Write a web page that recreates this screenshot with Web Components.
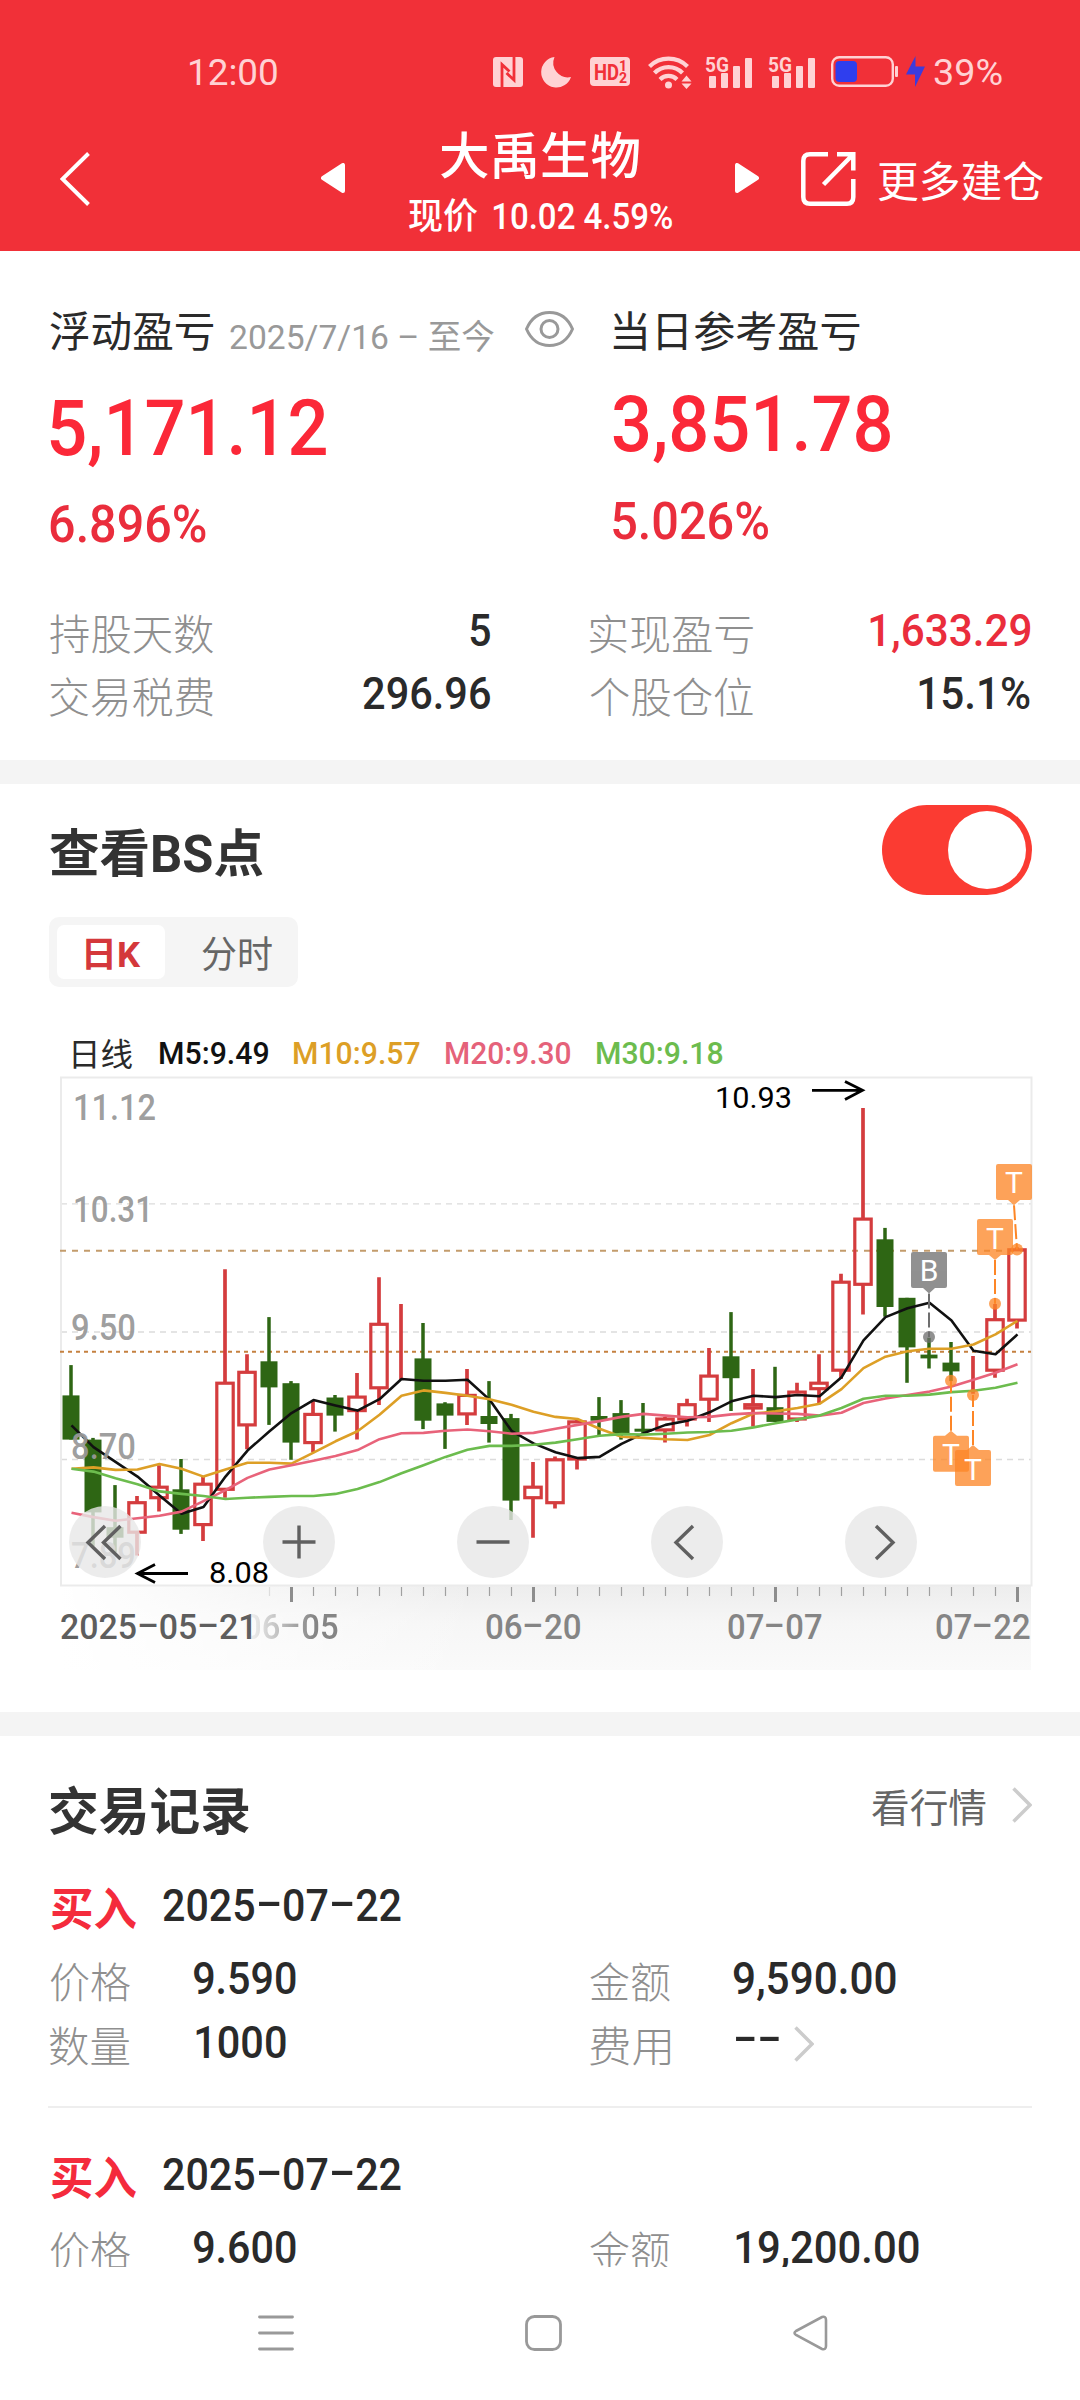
<!DOCTYPE html>
<html lang="zh-CN">
<head>
<meta charset="UTF-8">
<title>大禹生物</title>
<style>
    body {
        margin: 0;
        width: 1080px;
        height: 2400px;
        overflow: hidden;
        background: #fff;
        color: #2a2a2a;
        font-family: Roboto, "Noto Sans CJK SC", sans-serif;
    }
</style>
</head>
<body>
<stock-app></stock-app>

<script>
// One line of text whose box is its ink: the w attribute is the drawn width
class FitText extends HTMLElement {
    constructor() {
        super();
        this.attachShadow({ mode: "open" });
    }

    connectedCallback() {
        const text = this.textContent;
        this.shadowRoot.innerHTML = `
        <style>
            :host {
                display: block;
                flex: none;
            }

            span {
                display: block;
                width: max-content;
                white-space: pre;
                transform-origin: 0 0;
            }

            i {
                display: inline-block;
                font-style: normal;
                margin: 0 .15em;
                transform: translateY(-.085em) scaleX(1.9);
            }
        </style>
        <span>${text.replace(/-/g, "<i>-</i>")}</span>`;

        const css = getComputedStyle(this);
        const ctx = document.createElement("canvas").getContext("2d");
        ctx.font = `${css.fontWeight} ${css.fontSize} ${css.fontFamily}`;
        const m = ctx.measureText(text);
        const span = this.shadowRoot.querySelector("span");
        const height = Math.round(m.actualBoundingBoxAscent + m.actualBoundingBoxDescent);
        this.style.height = height + "px";
        span.style.lineHeight = height + "px";

        const left = -m.actualBoundingBoxLeft;
        const right = m.width - m.actualBoundingBoxRight;
        const ink = span.getBoundingClientRect().width - left - right;
        const width = Number(this.getAttribute("w")) || ink;
        const scale = width / ink;
        const baseline = (height + m.fontBoundingBoxAscent - m.fontBoundingBoxDescent) / 2;
        this.style.width = width + "px";
        span.style.transform = `translate(${-left * scale}px, ${m.actualBoundingBoxAscent - baseline}px) scaleX(${scale})`;
    }
}

class StatusBar extends HTMLElement {
    constructor() {
        super();
        this.attachShadow({ mode: "open" });
        const signal = `
        <svg width="46" height="34" viewBox="0 0 46 34" fill="currentColor">
            <text x="-1" y="17" font-size="21" font-weight="700" textLength="24" lengthAdjust="spacingAndGlyphs">5G</text>
            <rect x="3" y="21" width="7" height="12" rx="1"/>
            <rect x="15" y="18" width="7" height="15" rx="1"/>
            <rect x="27" y="11" width="7" height="22" rx="1"/>
            <rect x="39" y="3" width="7" height="30" rx="1"/>
        </svg>`;
        this.shadowRoot.innerHTML = `
        <style>
            :host {
                display: flex;
                align-items: center;
                box-sizing: border-box;
                height: 100px;
                padding: 43px 0 0 190px;
                color: #ffd2d4;
            }

            svg, fit-text { flex: none; overflow: visible; }
            fit-text { font-size: 37px; }
            .nfc { margin-left: 216px; }
            .moon { margin-left: 18px; }
            .hd { margin-left: 19px; }
            .wifi { margin: 0 14px 0 18px; }
            .battery { margin: 0 8px 0 16px; }
            .bolt { margin-right: 9px; }
            .gap { width: 17px; flex: none; }
        </style>
        <fit-text w="87">12:00</fit-text>
        <svg class="nfc" width="30" height="30" viewBox="0 0 30 30">
            <rect width="30" height="30" rx="3" fill="currentColor"/>
            <path d="M9 30V7.5L16.5 14.5M21 0V23L13.5 16" fill="none" stroke="#f13038" stroke-width="2.8"/>
        </svg>
        <svg class="moon" width="30" height="30" viewBox="0 0 30 30">
            <path d="M13.5 0A15.3 15.3 0 1 0 30 20A14.6 14.6 0 0 1 13.5 0Z" fill="currentColor"/>
        </svg>
        <svg class="hd" width="40" height="29" viewBox="0 0 40 29" fill="#f13038" font-weight="700">
            <rect width="40" height="29" rx="4" fill="currentColor"/>
            <text x="4" y="22.5" font-size="22" textLength="25" lengthAdjust="spacingAndGlyphs">HD</text>
            <text x="29" y="14" font-size="14">1</text>
            <text x="29" y="26" font-size="14">2</text>
        </svg>
        <svg class="wifi" width="44" height="35" viewBox="0 0 44 35" fill="none" stroke="currentColor" stroke-width="4.2">
            <path d="M1.5 12.5A27 27 0 0 1 39.5 12.5M6.5 19A19.5 19.5 0 0 1 34.5 19M12 25.5A12 12 0 0 1 29 25.5"/>
            <circle cx="20.5" cy="31" r="3.5" fill="currentColor" stroke="none"/>
            <path d="M33.5 27.5l5-6 5 6zM33.5 29.500l5 5.5 5-5.5z" fill="currentColor" stroke="none"/>
        </svg>
        ${signal}
        <div class="gap"></div>
        ${signal}
        <svg class="battery" width="67" height="31" viewBox="0 0 67 31">
            <rect x="1.2" y="1.2" width="60.6" height="28.6" rx="7" fill="none" stroke="currentColor" stroke-width="2.4"/>
            <rect x="4.5" y="5" width="21.5" height="21" rx="4" fill="#2f3eee"/>
            <rect x="64" y="10" width="3" height="11" rx="1" fill="currentColor"/>
        </svg>
        <svg class="bolt" width="19" height="31" viewBox="0 0 19 31">
            <path d="M9.5 0L0 18.5H9V31L19 10.5H9.5Z" fill="#3d3bdc"/>
        </svg>
        <fit-text w="68">39%</fit-text>`;
    }
}

class StockHeader extends HTMLElement {
    constructor() {
        super();
        this.attachShadow({ mode: "open" });
        this.shadowRoot.innerHTML = `
        <style>
            :host {
                display: block;
                height: 251px;
                background: #f13038;
                color: #fff;
            }

            .bar {
                display: flex;
                align-items: flex-start;
                padding-left: 60px;
            }

            svg { flex: none; }
            .back { margin-top: 52px; }
            .prev { margin: 63px 64px 0 231px; }
            .next { margin: 63px 42px 0 63px; }
            .share { margin: 52px 22px 0 0; }
            .name { margin: 31px 0 19px 32px; font-size: 50px; font-weight: 500; }
            .price { display: flex; align-items: flex-start; font-size: 36px; font-weight: 500; }
            .price fit-text + fit-text { margin: 5px 0 0 15px; }
            .more { margin-top: 61px; font-size: 42px; }
        </style>
        <status-bar></status-bar>
        <div class="bar">
            <svg class="back" width="30" height="54" viewBox="0 0 30 54">
                <path d="M28.5 1.5L2.5 27L28.5 52.5" fill="none" stroke="#fff" stroke-width="4"/>
            </svg>
            <svg class="prev" width="24" height="30" viewBox="0 0 24 30">
                <path d="M2 15L22 2V28Z" fill="#fff" stroke="#fff" stroke-width="4" stroke-linejoin="round"/>
            </svg>
            <div>
                <fit-text class="name" w="198">大禹生物</fit-text>
                <div class="price">
                    <fit-text w="69">现价</fit-text>
                    <fit-text w="179">10.02 4.59%</fit-text>
                </div>
            </div>
            <svg class="next" width="24" height="30" viewBox="0 0 24 30">
                <path d="M22 15L2 2V28Z" fill="#fff" stroke="#fff" stroke-width="4" stroke-linejoin="round"/>
            </svg>
            <svg class="share" width="55" height="54" viewBox="0 0 55 54" fill="none" stroke="#fff" stroke-width="4.5">
                <path d="M27 2.3H9Q2.3 2.3 2.3 9V45Q2.3 51.7 9 51.7H46Q52.3 51.7 52.3 45V27"/>
                <path d="M36 2.3H52.3V18.5M51.5 3L22.5 32.5"/>
            </svg>
            <fit-text class="more" w="165">更多建仓</fit-text>
        </div>`;
    }
}

class ProfitSummary extends HTMLElement {
    constructor() {
        super();
        this.attachShadow({ mode: "open" });
        this.shadowRoot.innerHTML = `
        <style>
            :host {
                display: block;
                box-sizing: border-box;
                height: 509px;
                padding: 0 50px;
            }

            .top {
                display: flex;
                align-items: flex-start;
                height: 363px;
            }

            .left { width: 563px; padding-top: 60px; }
            .right { padding-top: 59px; }
            .row { display: flex; align-items: flex-start; height: 87px; }
            .right .row { height: 85px; }
            .title { font-size: 42px; }
            .date { margin: 8px 31px 0 16px; font-size: 34px; color: #999; }
            .big { height: 106px; color: #fb2838; font-size: 77px; font-weight: 500; }
            .rate { color: #ea2d3c; font-size: 51px; font-weight: 500; }

            .stats {
                display: grid;
                grid-template-columns: 440px 440px;
                column-gap: 100px;
                row-gap: 23px;
            }

            .stats div {
                display: flex;
                justify-content: space-between;
                align-items: flex-start;
                height: 40px;
            }

            .stats fit-text { font-size: 42px; font-weight: 300; color: #8f8f8f; }
            .stats fit-text.v { font-size: 45px; font-weight: 500; color: #2a2a2a; }
            .stats fit-text.up { color: #ea2d3c; }
        </style>
        <div class="top">
            <div class="left">
                <div class="row">
                    <fit-text class="title" w="163.5">浮动盈亏</fit-text>
                    <fit-text class="date" w="264">2025/7/16 – 至今</fit-text>
                    <svg width="49" height="36" viewBox="0 0 49 36" fill="none" stroke="#999" stroke-width="3">
                        <path d="M1.5 18C6 7.5 14 1.5 24.5 1.5S43 7.5 47.5 18C43 28.5 35 34.5 24.5 34.5S6 28.5 1.5 18Z"/>
                        <circle cx="24.5" cy="18" r="8.5"/>
                    </svg>
                </div>
                <div class="big"><fit-text w="276">5,171.12</fit-text></div>
                <fit-text class="rate" w="156">6.896%</fit-text>
            </div>
            <div class="right">
                <div class="row"><fit-text class="title" w="246.5">当日参考盈亏</fit-text></div>
                <div class="big"><fit-text w="277">3,851.78</fit-text></div>
                <fit-text class="rate" w="155.5">5.026%</fit-text>
            </div>
        </div>
        <div class="stats">
            <div><fit-text w="163.5">持股天数</fit-text><fit-text class="v" w="20">5</fit-text></div>
            <div><fit-text w="163.5">实现盈亏</fit-text><fit-text class="v up" w="160">1,633.29</fit-text></div>
            <div><fit-text w="163.5">交易税费</fit-text><fit-text class="v" w="127">296.96</fit-text></div>
            <div><fit-text w="163.5">个股仓位</fit-text><fit-text class="v" w="111">15.1%</fit-text></div>
        </div>`;
    }
}

// [up, high, body top, body bottom, low] in chart units, one per trading day
const DAYS = [
    [0, 820, 892, 997, 997], [0, 993, 997, 1170, 1250], [0, 1105, 1205, 1230, 1265], [1, 1131, 1147, 1217, 1272],
    [1, 1058, 1110, 1135, 1168], [0, 1043, 1115, 1211, 1221], [1, 1085, 1103, 1199, 1238], [1, 592, 863, 1115, 1135],
    [1, 794, 837, 962, 1020], [0, 706, 811, 873, 962], [0, 858, 863, 1004, 1045], [1, 903, 937, 1004, 1027],
    [0, 891, 897, 940, 978], [1, 839, 896, 928, 997], [1, 611, 723, 874, 915], [1, 675, 776, 776, 855],
    [0, 720, 804, 952, 972], [0, 908, 911, 940, 1019], [1, 829, 892, 936, 962], [0, 858, 941, 960, 1004],
    [0, 936, 946, 1142, 1188], [1, 1050, 1110, 1135, 1230], [1, 1037, 1045, 1147, 1161], [1, 950, 955, 1043, 1068],
    [0, 896, 941, 952, 990], [0, 903, 934, 985, 997], [0, 910, 971, 976, 985], [1, 943, 948, 974, 1004],
    [1, 900, 914, 948, 966], [1, 779, 846, 901, 955], [0, 694, 799, 851, 929], [1, 829, 914, 922, 966],
    [0, 824, 920, 955, 955], [1, 862, 884, 948, 955], [1, 794, 863, 876, 910], [1, 603, 623, 832, 853],
    [1, 209, 473, 628, 700], [0, 494, 521, 682, 705], [0, 660, 660, 778, 862], [0, 755, 795, 804, 828],
    [0, 765, 814, 835, 858], [1, 798, 831, 831, 888], [1, 675, 712, 832, 850], [1, 540, 546, 713, 733]
];

const AVERAGES = [
    ["#111", [963, 1015, 1050, 1085, 1130, 1173, 1157, 1085, 1023, 977, 934, 903, 916, 928, 901, 853, 857, 857, 855, 902, 976, 1006, 1027, 1041, 1038, 1007, 982, 962, 952, 932, 906, 893, 896, 891, 894, 849, 761, 706, 685, 672, 714, 786, 794, 747]],
    ["#dd9f26", [1066, 1063, 1069, 1068, 1055, 1066, 1085, 1068, 1052, 1052, 1054, 1028, 1001, 977, 938, 893, 880, 886, 893, 901, 914, 931, 943, 948, 971, 990, 993, 996, 998, 986, 958, 935, 930, 922, 912, 877, 827, 800, 787, 781, 781, 771, 747, 715]],
    ["#e8637a", [1171, 1181, 1190, 1184, 1178, 1168, 1143, 1117, 1088, 1068, 1058, 1047, 1036, 1022, 996, 982, 981, 976, 973, 977, 983, 981, 971, 962, 953, 943, 936, 940, 944, 943, 937, 934, 935, 936, 940, 933, 910, 899, 891, 883, 871, 855, 838, 818]],
    ["#6cbc4e", [1066, 1073, 1089, 1103, 1120, 1126, 1131, 1138, 1135, 1133, 1131, 1131, 1126, 1114, 1098, 1077, 1058, 1038, 1021, 1012, 1012, 1009, 1004, 996, 988, 984, 985, 983, 980, 979, 976, 968, 958, 949, 940, 922, 900, 893, 893, 890, 884, 881, 874, 862]]
];

const dayX = i => 71 + 22 * i;
const unitY = v => +(v / 2.376).toFixed(1);

class KlineChart extends HTMLElement {
    constructor() {
        super();
        this.attachShadow({ mode: "open" });
        this.render();
    }

    candles() {
        return DAYS.map(([up, high, top, bottom, low], i) => {
            const x = dayX(i);
            const [h, t, b, l] = [high, top, bottom, low].map(unitY);
            if (!up) {
                return `<path d="M${x} ${h}V${l}" stroke="#2e6614" stroke-width="3.5"/>
                <rect x="${x - 8.5}" y="${t}" width="17" height="${Math.max(b - t, 3)}" fill="#2e6614"/>`;
            }
            return `<path d="M${x} ${h}V${t}M${x} ${b}V${l}" stroke="#d43c3e" stroke-width="3.7"/>
            <rect x="${x - 8.2}" y="${t}" width="16.4" height="${b - t}" fill="none" stroke="#d43c3e" stroke-width="3.2"/>`;
        }).join("");
    }

    averages() {
        return AVERAGES.map(([color, values]) => {
            const points = values.map((v, i) => `${dayX(i) + 0.5},${unitY(v)}`).join(" ");
            return `<polyline points="${points}" fill="none" stroke="${color}" stroke-width="2.6" stroke-linejoin="round"/>`;
        }).join("");
    }

    // A flag with its tail towards the dot on the candle
    flag(letter, cx, top, tip, dotX, dotY, color) {
        const y = unitY(top);
        const t = unitY(tip);
        const below = tip < top;
        const edge = below ? y : y + 36;
        return `
        <g opacity=".76">
            <path d="M${cx - 16} ${y}h32a2 2 0 0 1 2 2v32a2 2 0 0 1-2 2h-32a2 2 0 0 1-2-2v-32a2 2 0 0 1 2-2zM${cx - 6} ${edge}L${cx} ${t}L${cx + 6} ${edge}z" fill="${color}"/>
            <circle cx="${dotX}" cy="${unitY(dotY)}" r="6" fill="${color}"/>
        </g>
        <path d="M${cx} ${t}L${dotX} ${unitY(dotY)}" stroke="${color}" stroke-width="2" stroke-dasharray="15 4"/>
        <text x="${cx}" y="${y + 29.5}" font-size="30" fill="#fff" text-anchor="middle">${letter}</text>`;
    }

    label(text, x, value, width) {
        return `<text x="${x - 2}" y="${unitY(value)}" textLength="${width + 4}" lengthAdjust="spacingAndGlyphs">${text}</text>`;
    }

    ticks() {
        let out = "";
        for (let i = 9; i < 44; i++) {
            const major = (i - 10) % 11 === 0;
            out += `<path d="M${dayX(i) + 0.5} 567V${major ? 582 : 576}" stroke="${i === 9 ? "#ddd" : major ? "#8d8d8d" : "#a0a0a0"}" stroke-width="${major ? 3 : 1.2}"/>`;
        }
        return out;
    }

    button(cx, icon) {
        return `<circle cx="${cx}" cy="522" r="36" fill="#e7e7e7" fill-opacity=".8"/>
        <path transform="translate(${cx} 522)" d="${icon}" fill="none" stroke="#606060" stroke-width="3.4"/>`;
    }

    render() {
        this.shadowRoot.innerHTML = `
        <style>
            :host { display: block; height: 692px; }

            .legend {
                display: flex;
                align-items: flex-start;
                height: 0;
                padding: 18px 0 0 73px;
                margin-bottom: -18px;
                font-size: 31px;
                font-weight: 500;
            }

            .legend fit-text { margin: 4px 26px 0 0; }
            .legend fit-text:first-child { margin: 0 28px 0 0; font-weight: 400; font-size: 32px; }

            .stack { display: grid; }
            .stack > * { grid-area: 1 / 1; }

            .axis {
                display: flex;
                align-items: flex-start;
                align-self: end;
                box-sizing: border-box;
                width: 971px;
                height: 85px;
                margin-left: 60px;
                padding: 29px 0 0 1px;
                color: #858585;
                font-size: 34.5px;
                font-weight: 500;
                background: linear-gradient(to right, #fff 0, rgba(255, 255, 255, .5) 200px, rgba(255, 255, 255, 0) 420px), linear-gradient(#ededed, #f6f6f6 45%, #fafafa);
            }

            .first { color: #5e5e5e; }
            .faded {
                margin: 0 148px 0 -7px;
                -webkit-mask-image: linear-gradient(to right, transparent, #000 75%);
                mask-image: linear-gradient(to right, transparent, #000 75%);
            }
            .mid { margin-right: 148px; }
            .late { margin-right: 114px; }
        </style>
        <div class="legend">
            <fit-text w="59">日线</fit-text>
            <fit-text w="108" style="color:#111">M5:9.49</fit-text>
            <fit-text w="126" style="color:#dd9f26">M10:9.57</fit-text>
            <fit-text w="125" style="color:#e5627a">M20:9.30</fit-text>
            <fit-text w="126" style="color:#6cbc4e">M30:9.18</fit-text>
        </div>
        <div class="stack">
            <div class="axis">
                <fit-text class="first" w="190">2025-05-21</fit-text>
                <fit-text class="faded" w="94">06-05</fit-text>
                <fit-text class="mid" w="94">06-20</fit-text>
                <fit-text class="late" w="94">07-07</fit-text>
                <fit-text w="94">07-22</fit-text>
            </div>
            <svg width="1080" height="650" viewBox="0 0 1080 650">
                <path d="M61 183.8H1031M61 312H1031M61 439.5H1031" stroke="#dcdcdc" stroke-width="1.3" stroke-dasharray="6 5"/>
                <rect x="61" y="57.5" width="970.5" height="508" fill="none" stroke="#ebebeb" stroke-width="2"/>
                <path d="M60 230.7H1031" stroke="#c39c6c" stroke-width="2" stroke-dasharray="6 6"/>
                <path d="M60 331.7H1031" stroke="#c58140" stroke-width="2" stroke-dasharray="4 4"/>
                ${this.candles()}
                ${this.averages()}
                <g fill="#999" fill-opacity=".95" font-size="36" font-weight="500">
                    ${this.label("11.12", 75, 238, 79)}
                    ${this.label("10.31", 75, 479, 76)}
                    ${this.label("9.50", 73, 760, 61)}
                    ${this.label("8.70", 73, 1042, 61)}
                    ${this.label("7.89", 73, 1303, 61)}
                </g>
                <g fill="#000" font-size="29.5">
                    ${this.label("10.93", 717, 208, 73)}
                    ${this.label("8.08", 211, 1337, 56)}
                </g>
                <path d="M812 70.3H862M845 61.5L862.5 70.3L845 79.5M188 553.5H138M155 544.5L137.5 553.5L155 562.5" fill="none" stroke="#000" stroke-width="2.8"/>
                ${this.flag("B", 929, 551, 650, 929, 753, "#6e6e6e")}
                ${this.flag("T", 1014, 342, 440, 1017, 545, "#fd8626")}
                ${this.flag("T", 995, 473, 570, 995, 674, "#fd8626")}
                ${this.flag("T", 951, 988, 976, 951, 857, "#fd8626")}
                ${this.flag("T", 973, 1022, 1010, 973, 891, "#fd8626")}
                ${this.ticks()}
                ${this.button(105, "M0 -16L-17 .5L0 17M15.5 -16L-1.5 .5L15.5 17")}
                ${this.button(299, "M-16.5 0H16.5M0 -16.5V16.5")}
                ${this.button(493, "M-16.5 0H16.5")}
                ${this.button(687, "M6 -16L-11 .5L6 17")}
                ${this.button(881, "M-5 -16L12 .5L-5 17")}
            </svg>
        </div>`;
    }
}

class BsSection extends HTMLElement {
    constructor() {
        super();
        this.attachShadow({ mode: "open" });
        this.shadowRoot.innerHTML = `
        <style>
            :host { display: block; height: 928px; }

            .head {
                display: flex;
                justify-content: space-between;
                align-items: flex-start;
                height: 112px;
                padding: 21px 48px 0 50px;
            }

            .title { margin-top: 23px; color: #333; font-size: 51px; font-weight: 700; }

            .switch {
                display: flex;
                justify-content: flex-end;
                box-sizing: border-box;
                width: 150px;
                height: 90px;
                padding: 6px;
                border-radius: 45px;
                background: #fb3b32;
            }

            .switch div { width: 78px; height: 78px; border-radius: 50%; background: #fff; }

            .tabs {
                display: flex;
                box-sizing: border-box;
                width: 249px;
                height: 70px;
                margin: 0 0 33px 49px;
                padding: 8px;
                border-radius: 10px;
                background: #f5f5f5;
            }

            .on {
                box-sizing: border-box;
                width: 108px;
                padding: 13px 0 0 29px;
                border-radius: 7px;
                background: #fff;
                color: #d4383b;
                font-size: 35px;
                font-weight: 700;
            }

            .off { margin: 11px 0 0 37px; color: #666; font-size: 37px; }
        </style>
        <div class="head">
            <fit-text class="title" w="213">查看BS点</fit-text>
            <div class="switch"><div></div></div>
        </div>
        <div class="tabs">
            <div class="on"><fit-text w="55">日K</fit-text></div>
            <fit-text class="off" w="70">分时</fit-text>
        </div>
        <kline-chart></kline-chart>`;
    }
}

class TradeRecord extends HTMLElement {
    constructor() {
        super();
        this.attachShadow({ mode: "open" });
    }

    connectedCallback() {
        const cell = (name, value) => `
        <div class="cell">
            <fit-text class="k" w="80">${name}</fit-text>
            <slot name="${value}"></slot>
        </div>`;
        this.shadowRoot.innerHTML = `
        <style>
            :host {
                display: block;
                box-sizing: border-box;
                height: 269px;
                margin: 0 48px;
                padding: 48px 2px 0;
                border-top: 2px solid transparent;
            }

            :host([line]) { border-top-color: #eee; }
            .head { display: flex; align-items: flex-start; height: 75px; }
            .type { margin: 0 27px 0 1px; color: #f42b3c; font-size: 45px; font-weight: 700; }
            .date { margin-top: 2px; font-size: 44px; font-weight: 500; }
            .grid { display: grid; grid-template-columns: 540px 1fr; grid-auto-rows: 63.5px; }
            .cell { display: flex; align-items: flex-start; }
            .k { margin-right: 64px; font-size: 42px; font-weight: 300; color: #8f8f8f; }
            ::slotted(fit-text) { font-size: 45px; font-weight: 500; }
        </style>
        <div class="head">
            <fit-text class="type" w="85">买入</fit-text>
            <fit-text class="date" w="238">2025-07-22</fit-text>
        </div>
        <div class="grid">
            ${cell("价格", "price")}
            ${cell("金额", "amount")}
            ${cell("数量", "count")}
            ${cell("费用", "fee")}
        </div>`;
    }
}

class TradeSection extends HTMLElement {
    constructor() {
        super();
        this.attachShadow({ mode: "open" });
        this.shadowRoot.innerHTML = `
        <style>
            :host { display: block; height: 531px; overflow: hidden; }

            .head {
                display: flex;
                align-items: flex-start;
                height: 101px;
                padding: 49px 48px 0 50px;
                box-sizing: border-box;
            }

            .title { margin-right: auto; color: #333; font-size: 51px; font-weight: 700; }
            .link { margin: 3px 26px 0 0; color: #666; font-size: 39px; }
            .fee { display: flex; align-items: flex-start; }
            .fee fit-text { margin: 14px 14px 0 0; font-size: 45px; font-weight: 500; }
        </style>
        <div class="head">
            <fit-text class="title" w="199">交易记录</fit-text>
            <fit-text class="link" w="114">看行情</fit-text>
            <svg style="margin-top:2px" width="20" height="36" viewBox="0 0 20 36">
                <path d="M1.5 1.5L18 18L1.5 34.5" fill="none" stroke="#ccc" stroke-width="3.5"/>
            </svg>
        </div>
        <trade-record>
            <fit-text slot="price" w="102">9.590</fit-text>
            <fit-text slot="amount" w="162">9,590.00</fit-text>
            <fit-text slot="count" w="90" style="margin-left:2px">1000</fit-text>
            <div slot="fee" class="fee">
                <fit-text w="46">--</fit-text>
                <svg width="20" height="36" viewBox="0 0 20 36">
                    <path d="M1.5 1.5L18 18L1.5 34.5" fill="none" stroke="#ccc" stroke-width="3.5"/>
                </svg>
            </div>
        </trade-record>
        <trade-record line>
            <fit-text slot="price" w="102">9.600</fit-text>
            <fit-text slot="amount" w="183" style="margin-left:2px">19,200.00</fit-text>
        </trade-record>`;
    }
}

class NavBar extends HTMLElement {
    constructor() {
        super();
        this.attachShadow({ mode: "open" });
        this.shadowRoot.innerHTML = `
        <style>
            :host {
                display: flex;
                justify-content: space-between;
                align-items: center;
                box-sizing: border-box;
                height: 132px;
                padding: 0 252px 0 258px;
                background: #fff;
            }
        </style>
        <svg width="36" height="36" viewBox="0 0 36 36" stroke="#999" stroke-width="2.8" stroke-linecap="round">
            <path d="M1.5 2H34.5M1.5 18H34.5M1.5 34H34.5"/>
        </svg>
        <svg width="37" height="36" viewBox="0 0 37 36" fill="none" stroke="#999" stroke-width="2.8">
            <rect x="1.5" y="1.5" width="34" height="33" rx="8"/>
        </svg>
        <svg width="35" height="36" viewBox="0 0 35 36" fill="none" stroke="#999" stroke-width="2.6">
            <path d="M3 16L29 2Q33 1 33 5V31Q33 35 29 34L3 20Q0 18 3 16Z"/>
        </svg>`;
    }
}

class StockApp extends HTMLElement {
    constructor() {
        super();
        this.attachShadow({ mode: "open" });
        this.shadowRoot.innerHTML = `
        <style>
            :host { display: flex; flex-direction: column; height: 2400px; }
            :host > * { flex: none; }
            .band { height: 24px; flex: none; background: #f4f4f4; }
        </style>
        <stock-header></stock-header>
        <profit-summary></profit-summary>
        <div class="band"></div>
        <bs-section></bs-section>
        <div class="band"></div>
        <trade-section></trade-section>
        <nav-bar></nav-bar>`;
    }
}

customElements.define("stock-app", StockApp);
customElements.define("stock-header", StockHeader);
customElements.define("status-bar", StatusBar);
customElements.define("profit-summary", ProfitSummary);
customElements.define("bs-section", BsSection);
customElements.define("kline-chart", KlineChart);
customElements.define("trade-section", TradeSection);
customElements.define("trade-record", TradeRecord);
customElements.define("nav-bar", NavBar);
customElements.define("fit-text", FitText);
</script>
</body>
</html>
